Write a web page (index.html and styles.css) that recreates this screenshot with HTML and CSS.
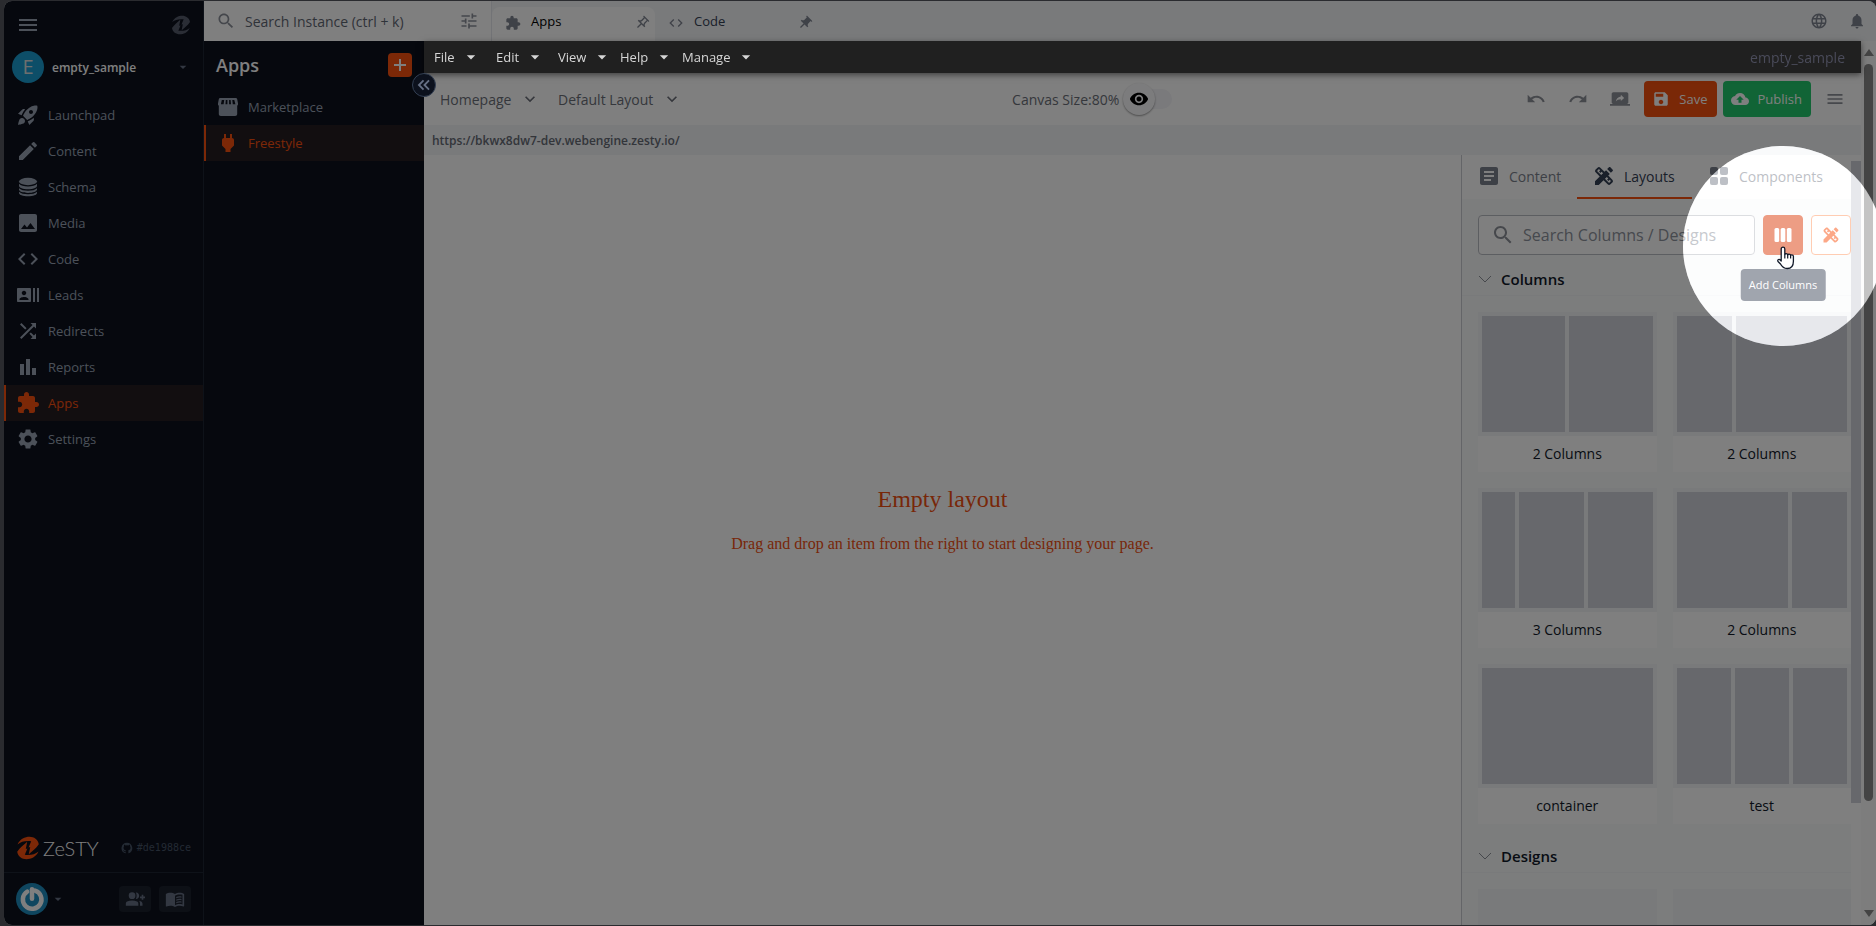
FILE: index.html
```html
<!DOCTYPE html>
<html lang="en">
<head>
<meta charset="utf-8">
<title>Zesty Freestyle</title>
<link rel="stylesheet" href="styles.css">
</head>
<body>
<svg class="sprite" aria-hidden="true">
  <symbol id="i-menu" viewBox="0 0 24 24"><path d="M3 18h18v-2H3v2zm0-5h18v-2H3v2zm0-7v2h18V6H3z"/></symbol>
  <symbol id="i-zmark" viewBox="0 0 24 24"><path d="M1.500 8.500C4 3 9 .8 13.500.8c4.500 0 8.500 2.700 9.300 7.500-2.800 4.200-6.800 7.200-10 10l1.400-7.300-1.600.4 2.600-6.200C9.500 4.600 5 5.500 1.500 8.500z"/><path transform="rotate(180 12 12)" d="M1.500 8.500C4 3 9 .8 13.500.8c4.500 0 8.500 2.700 9.300 7.500-2.800 4.200-6.800 7.200-10 10l1.400-7.300-1.600.4 2.600-6.200C9.500 4.600 5 5.500 1.500 8.500z"/></symbol>
  <symbol id="i-rocket" viewBox="0 0 24 24"><path d="M9.190 6.350c-2.040 2.290-3.440 5.580-3.570 5.890L2 10.690l4.050-4.050c.47-.47 1.150-.68 1.810-.55l1.330.26zM11.170 17s3.740-1.550 5.890-3.700c5.400-5.400 4.500-9.620 4.210-10.570-.95-.3-5.170-1.190-10.570 4.210C8.550 9.090 7 12.830 7 12.830L11.170 17zm6.480-2.190c-2.290 2.040-5.580 3.440-5.890 3.570L13.310 22l4.050-4.050c.47-.47.68-1.150.55-1.810l-.26-1.330zM9 18c0 .83-.34 1.580-.88 2.120C6.940 21.300 2 22 2 22s.7-4.940 1.880-6.120C4.420 15.340 5.170 15 6 15c1.660 0 3 1.340 3 3zm4-9c0-1.100.9-2 2-2s2 .9 2 2-.9 2-2 2-2-.9-2-2z"/></symbol>
  <symbol id="i-pencil" viewBox="0 0 24 24"><path d="M3 17.250V21h3.750L17.810 9.940l-3.750-3.750L3 17.250zM20.710 7.040c.39-.39.39-1.020 0-1.410l-2.340-2.340a1 1 0 0 0-1.410 0l-1.830 1.830 3.750 3.750 1.830-1.830z"/></symbol>
  <symbol id="i-db" viewBox="0 0 24 24"><ellipse cx="12" cy="6.500" rx="9" ry="3.700"/><path d="M3 8.800c1.600 1.800 5 2.600 9 2.600s7.400-.8 9-2.600v1.900c0 2-4 3.500-9 3.500s-9-1.500-9-3.500zM3 13.200c1.600 1.700 5 2.500 9 2.500s7.400-.8 9-2.500v1.300c0 2-4 3.400-9 3.400s-9-1.400-9-3.400zM3 16.800c1.600 1.700 5 2.500 9 2.500s7.400-.8 9-2.500v1.200c0 2-4 3.200-9 3.200s-9-1.200-9-3.200z"/></symbol>
  <symbol id="i-image" viewBox="0 0 24 24"><path d="M21 19V5c0-1.100-.9-2-2-2H5c-1.100 0-2 .9-2 2v14c0 1.100.9 2 2 2h14c1.100 0 2-.9 2-2zM8.500 13.500l2.500 3.010L14.500 12l4.500 6H5l3.500-4.500z"/></symbol>
  <symbol id="i-code" viewBox="0 0 24 24"><path d="M9.400 16.600 4.800 12l4.600-4.600L8 6l-6 6 6 6 1.400-1.400zm5.200 0 4.600-4.600-4.600-4.600L16 6l6 6-6 6-1.400-1.400z"/></symbol>
  <symbol id="i-leads" viewBox="0 0 24 24"><path d="M21 5v14h2V5h-2zm-4 14h2V5h-2v14zM14 5H2c-.55 0-1 .45-1 1v12c0 .55.45 1 1 1h12c.55 0 1-.45 1-1V6c0-.55-.45-1-1-1zM8 7.750c1.240 0 2.250 1.010 2.250 2.250S9.240 12.250 8 12.250 5.750 11.240 5.750 10 6.760 7.750 8 7.750zM12.500 17h-9v-.75c0-1.500 3-2.250 4.500-2.250s4.500.75 4.500 2.250V17z"/></symbol>
  <symbol id="i-shuffle" viewBox="0 0 24 24"><path d="M10.590 9.170 5.410 4 4 5.410l5.170 5.170 1.420-1.410zM14.500 4l2.040 2.040L4 18.590 5.410 20 17.960 7.460 20 9.500V4h-5.500zm.33 9.410-1.410 1.410 3.130 3.130L14.500 20H20v-5.500l-2.040 2.040-3.130-3.130z"/></symbol>
  <symbol id="i-bars" viewBox="0 0 24 24"><path d="M4 9h4v11H4zM16 13h4v7h-4zM10 4h4v16h-4z"/></symbol>
  <symbol id="i-puzzle" viewBox="0 0 24 24"><path d="M20.500 11H19V7c0-1.100-.9-2-2-2h-4V3.500C13 2.120 11.880 1 10.500 1S8 2.120 8 3.500V5H4c-1.100 0-1.990.9-1.990 2v3.800H3.500c1.490 0 2.700 1.210 2.700 2.700s-1.210 2.700-2.700 2.700H2V20c0 1.100.9 2 2 2h3.800v-1.500c0-1.490 1.210-2.700 2.700-2.700 1.490 0 2.700 1.210 2.700 2.700V22H17c1.100 0 2-.9 2-2v-4h1.500c1.380 0 2.500-1.120 2.500-2.500S21.880 11 20.500 11z"/></symbol>
  <symbol id="i-gear" viewBox="0 0 24 24"><path d="M19.140 12.940c.04-.3.06-.61.06-.94 0-.32-.02-.64-.07-.94l2.030-1.580c.18-.14.23-.41.12-.61l-1.920-3.320c-.12-.22-.37-.29-.59-.22l-2.390.96c-.5-.38-1.030-.7-1.620-.94l-.36-2.540c-.04-.24-.24-.41-.48-.41h-3.840c-.24 0-.43.17-.47.41l-.36 2.540c-.59.24-1.130.57-1.620.94l-2.390-.96c-.22-.08-.47 0-.59.22L2.740 8.870c-.12.21-.08.47.12.61l2.030 1.580c-.05.3-.09.63-.09.94s.02.64.07.94l-2.030 1.580c-.18.14-.23.41-.12.61l1.920 3.320c.12.22.37.29.59.22l2.390-.96c.5.38 1.030.7 1.620.94l.36 2.540c.05.24.24.41.48.41h3.840c.24 0 .44-.17.47-.41l.36-2.540c.59-.24 1.130-.56 1.620-.94l2.390.96c.22.08.47 0 .59-.22l1.920-3.320c.12-.22.07-.47-.12-.61l-2.010-1.580zM12 15.600c-1.980 0-3.600-1.620-3.600-3.600s1.620-3.600 3.600-3.600 3.600 1.620 3.600 3.600-1.620 3.600-3.600 3.600z"/></symbol>
  <symbol id="i-store" viewBox="0 0 24 24"><path d="M4.500 3h15c.9 0 1.500.5 1.700 1.300L22 8.200c.2 1-.1 1.900-.8 2.600V19c0 1.100-.9 2-2 2H4.800c-1.100 0-2-.9-2-2v-8.200C2.100 10.100 1.800 9.200 2 8.200l.8-3.900C3 3.500 3.600 3 4.500 3zM5.800 5l-.9 4.200h2.700L8.200 5zm4 0-.3 4.200h1.900V5zm3.300 0v4.200H15L14.600 5zm3.200 0 .5 4.200h2.600L18.300 5z"/></symbol>
  <symbol id="i-plug" viewBox="0 0 24 24"><path d="M16.010 7 16 3h-2v4h-4V3H8v4h-.01C7 6.990 6 7.990 6 8.990v5.490L9.500 18v3h5v-3l3.500-3.510v-5.500c0-1-1-2-1.990-1.990z"/></symbol>
  <symbol id="i-search" viewBox="0 0 24 24"><path d="M15.500 14h-.79l-.28-.27C15.410 12.590 16 11.110 16 9.500 16 5.910 13.090 3 9.500 3S3 5.910 3 9.500 5.910 16 9.500 16c1.610 0 3.090-.59 4.230-1.570l.27.28v.79l5 4.990L20.490 19l-4.990-5zm-6 0C7.010 14 5 11.990 5 9.500S7.010 5 9.500 5 14 7.010 14 9.500 11.990 14 9.500 14z"/></symbol>
  <symbol id="i-tune" viewBox="0 0 24 24"><path d="M3 17v2h6v-2H3zM3 5v2h10V5H3zm10 16v-2h8v-2h-8v-2h-2v6h2zM7 9v2H3v2h4v2h2V9H7zm14 4v-2H11v2h10zm-6-4h2V7h4V5h-4V3h-2v6z"/></symbol>
  <symbol id="i-pin-o" viewBox="0 0 24 24"><path transform="rotate(45 12 12)" d="M14 4v5c0 1.120.37 2.160 1 3H9c.65-.86 1-1.900 1-3V4h4m3-2H7c-.55 0-1 .45-1 1s.45 1 1 1h1v5c0 1.660-1.340 3-3 3v2h5.970v7l1 1 1-1v-7H19v-2c-1.660 0-3-1.340-3-3V4h1c.55 0 1-.45 1-1s-.45-1-1-1z"/></symbol>
  <symbol id="i-pin" viewBox="0 0 24 24"><path transform="rotate(45 12 12)" d="M16 9V4h1c.55 0 1-.45 1-1s-.45-1-1-1H7c-.55 0-1 .45-1 1s.45 1 1 1h1v5c0 1.660-1.340 3-3 3v2h5.970v7l1 1 1-1v-7H19v-2c-1.660 0-3-1.340-3-3z"/></symbol>
  <symbol id="i-globe" viewBox="0 0 24 24"><path d="M11.990 2C6.470 2 2 6.480 2 12s4.470 10 9.990 10C17.520 22 22 17.520 22 12S17.520 2 11.990 2zm6.930 6h-2.950c-.32-1.250-.78-2.450-1.380-3.560 1.840.63 3.370 1.910 4.330 3.560zM12 4.040c.83 1.200 1.480 2.530 1.910 3.960h-3.820c.43-1.430 1.080-2.760 1.910-3.960zM4.260 14C4.100 13.360 4 12.690 4 12s.1-1.360.26-2h3.380c-.08.66-.14 1.320-.14 2s.06 1.340.14 2H4.260zm.82 2h2.950c.32 1.250.78 2.450 1.380 3.560-1.840-.63-3.370-1.900-4.330-3.560zm2.950-8H5.080c.96-1.660 2.490-2.930 4.330-3.560C8.810 5.550 8.350 6.750 8.030 8zM12 19.960c-.83-1.200-1.480-2.530-1.910-3.960h3.820c-.43 1.430-1.080 2.760-1.910 3.960zM14.340 14H9.660c-.09-.66-.16-1.320-.16-2s.07-1.350.16-2h4.680c.09.65.16 1.320.16 2s-.07 1.340-.16 2zm.25 5.560c.6-1.110 1.060-2.310 1.380-3.560h2.950c-.96 1.650-2.490 2.930-4.330 3.560zM16.360 14c.08-.66.14-1.320.14-2s-.06-1.340-.14-2h3.380c.16.64.26 1.310.26 2s-.1 1.360-.26 2h-3.380z"/></symbol>
  <symbol id="i-bell" viewBox="0 0 24 24"><path d="M12 22c1.100 0 2-.9 2-2h-4c0 1.100.89 2 2 2zm6-6v-5c0-3.070-1.640-5.640-4.500-6.320V4c0-.83-.67-1.500-1.500-1.500s-1.500.67-1.500 1.500v.68C7.630 5.360 6 7.920 6 11v5l-2 2v1h16v-1l-2-2z"/></symbol>
  <symbol id="i-caret" viewBox="0 0 24 24"><path d="m7 10 5 5 5-5z"/></symbol>
  <symbol id="i-chevron" viewBox="0 0 24 24"><path d="M7.410 8.590 12 13.170l4.590-4.580L18 10l-6 6-6-6z"/></symbol>
  <symbol id="i-eye" viewBox="0 0 24 24"><path d="M12 4.500C7 4.500 2.730 7.610 1 12c1.730 4.390 6 7.500 11 7.500s9.270-3.110 11-7.500c-1.730-4.390-6-7.500-11-7.500zM12 17c-2.760 0-5-2.240-5-5s2.240-5 5-5 5 2.240 5 5-2.240 5-5 5zm0-8c-1.660 0-3 1.340-3 3s1.340 3 3 3 3-1.340 3-3-1.340-3-3-3z"/></symbol>
  <symbol id="i-undo" viewBox="0 0 24 24"><path d="M12.500 8c-2.650 0-5.050.99-6.900 2.600L2 7v9h9l-3.620-3.620c1.390-1.160 3.160-1.880 5.120-1.880 3.540 0 6.550 2.310 7.600 5.500l2.370-.78C21.080 11.030 17.150 8 12.500 8z"/></symbol>
  <symbol id="i-redo" viewBox="0 0 24 24"><path d="M18.400 10.600C16.550 8.990 14.150 8 11.500 8c-4.650 0-8.580 3.030-9.960 7.220L3.900 16c1.050-3.190 4.050-5.500 7.600-5.500 1.950 0 3.730.72 5.120 1.880L13 16h9V7l-3.600 3.600z"/></symbol>
  <symbol id="i-share" viewBox="0 0 24 24"><path d="M20 18c1.100 0 1.990-.9 1.990-2L22 6c0-1.110-.9-2-2-2H4c-1.110 0-2 .89-2 2v10c0 1.100.89 2 2 2H0v2h24v-2h-4zm-7-3.530v-2.190c-2.780 0-4.610.85-6 2.720.56-2.670 2.110-5.330 6-5.870V7l4 3.730-4 3.740z"/></symbol>
  <symbol id="i-save" viewBox="0 0 24 24"><path d="M17 3H5c-1.110 0-2 .9-2 2v14c0 1.100.89 2 2 2h14c1.100 0 2-.9 2-2V7l-4-4zm-5 16c-1.660 0-3-1.340-3-3s1.340-3 3-3 3 1.340 3 3-1.340 3-3 3zm3-10H5V5h10v4z"/></symbol>
  <symbol id="i-cloud" viewBox="0 0 24 24"><path d="M19.350 10.040C18.670 6.590 15.640 4 12 4 9.110 4 6.600 5.640 5.350 8.040 2.340 8.360 0 10.910 0 14c0 3.310 2.690 6 6 6h13c2.760 0 5-2.240 5-5 0-2.640-2.050-4.780-4.650-4.960zM14 13v4h-4v-4H7l5-5 5 5h-3z"/></symbol>
  <symbol id="i-article" viewBox="0 0 24 24"><path d="M19 3H5c-1.100 0-2 .9-2 2v14c0 1.100.9 2 2 2h14c1.100 0 2-.9 2-2V5c0-1.100-.9-2-2-2zm-5 14H7v-2h7v2zm3-4H7v-2h10v2zm0-4H7V7h10v2z"/></symbol>
  <symbol id="i-design" viewBox="0 0 24 24"><path d="m16.240 11.510 1.570-1.570-3.750-3.750-1.570 1.570-4.140-4.130c-.78-.78-2.050-.78-2.830 0l-1.900 1.900c-.78.78-.78 2.050 0 2.830l4.130 4.130L3 17.250V21h3.750l4.760-4.760 4.130 4.130c.95.95 2.230.6 2.830 0l1.900-1.900c.78-.78.78-2.050 0-2.830l-4.130-4.130zm-7.060-.44L5.040 6.940l1.890-1.900L8.200 6.310 7.020 7.500l1.410 1.410 1.190-1.190 1.450 1.450-1.890 1.900zm7.880 7.890-4.130-4.130 1.900-1.900 1.450 1.450-1.190 1.190 1.410 1.410 1.190-1.190 1.270 1.270-1.900 1.900zM20.710 7.040c.39-.39.39-1.020 0-1.410l-2.340-2.340c-.47-.47-1.120-.29-1.410 0l-1.830 1.830 3.750 3.750 1.830-1.830z"/></symbol>
  <symbol id="i-blocks" viewBox="0 0 24 24"><rect x="3" y="3" width="8" height="8" rx="2"/><rect x="13" y="3" width="8" height="8" rx="2"/><rect x="3" y="13" width="8" height="8" rx="2"/><rect x="13" y="13" width="8" height="8" rx="2"/></symbol>
  <symbol id="i-columns" viewBox="0 0 24 24"><rect x="1.800" y="3.600" width="5.600" height="16.800" rx="1.800"/><rect x="9.200" y="3.600" width="5.600" height="16.800" rx="1.800"/><rect x="16.600" y="3.600" width="5.600" height="16.800" rx="1.800"/></symbol>
  <symbol id="i-github" viewBox="0 0 24 24"><path d="M12 1.300a11 11 0 0 0-3.500 21.400c.6.100.8-.2.800-.5v-2.100c-3 .7-3.700-1.300-3.700-1.300-.5-1.300-1.200-1.600-1.200-1.600-1-.7.1-.7.100-.7 1.100.1 1.700 1.100 1.700 1.100 1 1.700 2.600 1.200 3.200.9.100-.7.400-1.200.7-1.500-2.400-.3-5-1.200-5-5.400 0-1.200.4-2.200 1.100-3-.1-.3-.5-1.400.1-2.900 0 0 .9-.3 3 1.100a10.500 10.500 0 0 1 5.500 0c2.100-1.400 3-1.100 3-1.100.6 1.500.2 2.600.1 2.900.7.800 1.100 1.800 1.100 3 0 4.200-2.600 5.100-5 5.400.4.300.8 1 .8 2v3c0 .3.200.6.800.5A11 11 0 0 0 12 1.300z"/></symbol>
  <symbol id="i-group" viewBox="0 0 24 24"><circle cx="8.500" cy="8" r="4"/><path d="M1 20v-2.300c0-1.200.6-2.100 1.600-2.600C4.300 14.300 6.300 13.800 8.500 13.800s4.200.5 5.900 1.300c1 .5 1.600 1.400 1.600 2.600V20zM13 4.100c2.200-.3 4 1.500 4 3.900s-1.800 4.200-4 3.900c1.300-2.200 1.300-5.600 0-7.800zM17 14.200c2.400.6 4 1.700 4 3.600V20h-3v-2.500c0-1.300-.3-2.400-1-3.300zM20 7h2v2h2v2h-2v2h-2v-2h-2V9h2z"/></symbol>
  <symbol id="i-book" viewBox="0 0 24 24"><path d="M12 6C10.500 4.900 8.500 4.500 6.500 4.500S2.400 4.900 1 6v14.600c0 .4.400.6.800.4C3.200 20.400 5 20 6.500 20c2 0 4 .4 5.500 1.500 1.500-1 3.700-1.500 5.500-1.500 1.600 0 3.300.3 4.700 1 .4.200.8-.1.800-.5V6c-1.500-1.100-3.500-1.500-5.500-1.500S13.500 4.900 12 6zm9 12.500c-1.100-.3-2.300-.5-3.500-.5-1.700 0-4.100.6-5.500 1.500V8c1.400-.9 3.800-1.500 5.500-1.500 1.200 0 2.400.2 3.500.5zM13.500 9.500c2-.7 4-.9 6.300-.5v1.500c-2.200-.4-4.300-.2-6.300.6zm0 3c2-.7 4-.9 6.300-.5v1.500c-2.200-.4-4.300-.2-6.300.6zm0 3c2-.7 4-.9 6.300-.5v1.500c-2.200-.4-4.300-.2-6.300.6z"/></symbol>
</svg>

<div class="app">
  <aside class="sidebar">
    <div class="side-top">
      <button class="plain" aria-label="Menu"><svg class="i24"><use href="#i-menu"/></svg></button>
      <svg class="i20 zgrey"><use href="#i-zmark"/></svg>
    </div>
    <button class="account plain">
      <span class="avatar">E</span><span class="account-name">empty_sample</span><svg class="i16 dim"><use href="#i-caret"/></svg>
    </button>
    <nav class="nav">
      <a href="#"><svg class="i24"><use href="#i-rocket"/></svg>Launchpad</a>
      <a href="#"><svg class="i24"><use href="#i-pencil"/></svg>Content</a>
      <a href="#"><svg class="i24"><use href="#i-db"/></svg>Schema</a>
      <a href="#"><svg class="i24"><use href="#i-image"/></svg>Media</a>
      <a href="#"><svg class="i24"><use href="#i-code"/></svg>Code</a>
      <a href="#"><svg class="i24"><use href="#i-leads"/></svg>Leads</a>
      <a href="#"><svg class="i24"><use href="#i-shuffle"/></svg>Redirects</a>
      <a href="#"><svg class="i24"><use href="#i-bars"/></svg>Reports</a>
      <a href="#" class="active"><svg class="i24"><use href="#i-puzzle"/></svg>Apps</a>
      <a href="#"><svg class="i24"><use href="#i-gear"/></svg>Settings</a>
    </nav>
    <div class="brand">
      <svg class="i24 zorange"><use href="#i-zmark"/></svg>
      <span class="wordmark">ZeSTY</span>
      <a class="commit" href="#"><svg class="i12"><use href="#i-github"/></svg>#de1988ce</a>
    </div>
    <div class="side-foot">
      <button class="user plain" aria-label="Profile">
        <svg class="i32" viewBox="0 0 32 32"><circle cx="16" cy="16" r="16" fill="#1e8cbe"/><path d="M11.200 8.600A9.300 9.300 0 1 0 19 7.600" fill="none" stroke="#fff" stroke-width="4.500" stroke-linecap="round"/><path d="M16 6.200v9.500" stroke="#fff" stroke-width="4.500" stroke-linecap="round"/></svg>
        <svg class="i16 dim"><use href="#i-caret"/></svg>
      </button>
      <button class="square" aria-label="Invite"><svg class="i20"><use href="#i-group"/></svg></button>
      <button class="square" aria-label="Docs"><svg class="i20"><use href="#i-book"/></svg></button>
    </div>
  </aside>

  <div class="workspace">
    <header class="topbar">
      <label class="global-search"><svg class="i20"><use href="#i-search"/></svg><input type="text" aria-label="Search Instance" placeholder="Search Instance (ctrl + k)"><svg class="i20"><use href="#i-tune"/></svg></label>
      <div class="tab current"><svg class="i16"><use href="#i-puzzle"/></svg><a href="#">Apps</a><svg class="i16"><use href="#i-pin-o"/></svg></div>
      <div class="tab"><svg class="i16"><use href="#i-code"/></svg><a href="#">Code</a><svg class="i16"><use href="#i-pin"/></svg></div>
      <div class="top-icons"><svg class="i18"><use href="#i-globe"/></svg><svg class="i18"><use href="#i-bell"/></svg></div>
    </header>

    <div class="body">
      <aside class="apps">
        <div class="apps-head"><h1>Apps</h1><button class="add" aria-label="Add app"><svg viewBox="0 0 24 24"><path d="M6 12h12M12 6v12" stroke="#fff" stroke-width="2"/></svg></button></div>
        <nav class="nav">
          <a href="#"><svg class="i24"><use href="#i-store"/></svg>Marketplace</a>
          <a href="#" class="active"><svg class="i24"><use href="#i-plug"/></svg>Freestyle</a>
        </nav>
        <button class="collapse" aria-label="Collapse"><svg viewBox="0 0 24 24"><path d="M11.500 7 6.500 12l5 5M17.500 7l-5 5 5 5" fill="none" stroke="#667085" stroke-width="2"/></svg></button>
      </aside>

      <main class="editor">
        <div class="editor-main">
          <div class="menubar">
            <button>File<svg class="i20"><use href="#i-caret"/></svg></button>
            <button>Edit<svg class="i20"><use href="#i-caret"/></svg></button>
            <button>View<svg class="i20"><use href="#i-caret"/></svg></button>
            <button>Help<svg class="i20"><use href="#i-caret"/></svg></button>
            <button>Manage<svg class="i20"><use href="#i-caret"/></svg></button>
            <span class="instance">empty_sample</span>
          </div>
          <div class="toolbar">
            <div class="picks">
              <label class="pick"><select aria-label="Page"><option>Homepage</option></select><svg class="i20"><use href="#i-chevron"/></svg></label>
              <label class="pick"><select aria-label="Layout"><option>Default Layout</option></select><svg class="i20"><use href="#i-chevron"/></svg></label>
            </div>
            <div class="canvas-size"><label for="preview">Canvas Size:80%</label><span class="switch"><input type="checkbox" id="preview"><span class="knob"><svg class="i20"><use href="#i-eye"/></svg></span></span></div>
            <div class="actions">
              <button class="plain" aria-label="Undo"><svg class="i20"><use href="#i-undo"/></svg></button>
              <button class="plain" aria-label="Redo"><svg class="i20"><use href="#i-redo"/></svg></button>
              <button class="plain" aria-label="Share"><svg class="i20"><use href="#i-share"/></svg></button>
              <div class="cta-group"><button class="cta save"><svg class="i18"><use href="#i-save"/></svg>Save</button><button class="cta publish"><svg class="i18"><use href="#i-cloud"/></svg>Publish</button></div>
              <button class="plain" aria-label="More"><svg class="i20"><use href="#i-menu"/></svg></button>
            </div>
          </div>
          <div class="url">https://bkwx8dw7-dev.webengine.zesty.io/</div>
          <div class="stage">
            <section class="canvas"><h2>Empty layout</h2><p>Drag and drop an item from the right to start designing your page.</p></section>
            <aside class="panel">
              <div class="panel-body">
                <nav class="panel-tabs">
                  <a href="#"><svg class="i24"><use href="#i-article"/></svg>Content</a>
                  <a href="#" class="on"><svg class="i24"><use href="#i-design"/></svg>Layouts</a>
                  <a href="#"><svg class="i24"><use href="#i-blocks"/></svg>Components</a>
                </nav>
                <div class="find">
                  <label class="find-box"><svg class="i24"><use href="#i-search"/></svg><input type="text" aria-label="Search Columns / Designs" placeholder="Search Columns / Designs"></label>
                  <div class="tip-wrap"><button class="tool filled" aria-label="Add Columns"><svg class="i20"><use href="#i-columns"/></svg></button><span class="tip">Add Columns</span></div>
                  <button class="tool" aria-label="Add Design"><svg class="i20"><use href="#i-design"/></svg></button>
                </div>
                <h3 class="group"><svg class="thin" viewBox="0 0 16 16"><path d="M2 5l6 6 6-6"/></svg>Columns</h3>
                <div class="cards">
                  <div class="card"><div class="thumb"><i class="f1"></i><i class="f1"></i></div><p>2 Columns</p></div>
                  <div class="card"><div class="thumb"><i class="f1"></i><i class="f2"></i></div><p>2 Columns</p></div>
                  <div class="card"><div class="thumb"><i class="f1"></i><i class="f2"></i><i class="f2"></i></div><p>3 Columns</p></div>
                  <div class="card"><div class="thumb"><i class="f2"></i><i class="f1"></i></div><p>2 Columns</p></div>
                  <div class="card"><div class="thumb"><i class="f1"></i></div><p>container</p></div>
                  <div class="card"><div class="thumb"><i class="f1"></i><i class="f1"></i><i class="f1"></i></div><p>test</p></div>
                </div>
                <h3 class="group"><svg class="thin" viewBox="0 0 16 16"><path d="M2 5l6 6 6-6"/></svg>Designs</h3>
                <div class="cards"><div class="card"><div class="thumb"></div></div><div class="card"><div class="thumb"></div></div></div>
              </div>
              <div class="panel-scroll"><div class="panel-thumb"></div></div>
            </aside>
          </div>
        </div>
        <div class="scroll"><span class="up"></span><div class="rail"><div class="bar"></div></div><span class="down"></span></div>
      </main>
    </div>
  </div>
</div>
<div class="spotlight"></div>
<svg class="pointer" viewBox="0 0 20 24"><path d="M7 1.200c1 0 1.800.8 1.800 1.800v5.600c.2-.7.7-1 1.400-1 .8 0 1.400.5 1.500 1.200.3-.5.800-.7 1.300-.7.9 0 1.500.6 1.600 1.300.3-.4.700-.6 1.200-.6.900 0 1.600.6 1.600 1.500v4.900c0 4.700-2.300 7.300-6.200 7.300-3.300 0-5.200-1.700-6.700-4.500L2 15.500c-.4-.8-.3-1.600.4-2 .7-.3 1.400-.1 1.900.5l.9 1V3c0-1 .8-1.800 1.800-1.800z" fill="#fff" stroke="#101828" stroke-width="1.300" stroke-linejoin="round"/><path d="M8.800 8.500v4M11.700 8.800v3.700M14.600 9.500v3" stroke="#101828" stroke-width="1.200"/></svg>
</body>
</html>
```

FILE: styles.css
```css
* { box-sizing: border-box; }
body {
  margin: 0;
  height: 100vh;
  padding: 1px 0 1px 4px;
  overflow: hidden;
  background: #54565e;
  font-family: "Open Sans", "Noto Sans", sans-serif;
  font-size: 13px;
  color: #101828;
}
h1, h2, h3, p { margin: 0; }
a { color: inherit; text-decoration: none; }
button, input, select { font: inherit; color: inherit; border: 0; padding: 0; background: none; }
svg { display: block; flex: none; fill: currentColor; }
.sprite { position: absolute; width: 0; height: 0; }
.i12 { width: 12px; height: 12px; }
.i16 { width: 16px; height: 16px; }
.i18 { width: 18px; height: 18px; }
.i20 { width: 20px; height: 20px; }
.i24 { width: 24px; height: 24px; }
.i32 { width: 32px; height: 32px; }
.dim { color: #667085; }
.plain { display: flex; align-items: center; }

.app { display: flex; height: 100%; border-radius: 8px; overflow: hidden; background: #fff; }

/* primary navigation */
.sidebar {
  flex: 0 0 200px;
  display: flex;
  flex-direction: column;
  background: #0c111d;
  color: #98a2b3;
  border-right: 1px solid #1d2433;
}
.side-top { display: flex; justify-content: space-between; align-items: center; padding: 12px; color: #98a2b3; }
.zgrey { color: #555b6b; }
.account { margin: 2px 12px 14px 8px; gap: 8px; }
.avatar {
  width: 32px; height: 32px; border-radius: 50%;
  display: grid; place-items: center;
  background: #1a9cd0; color: #ddd; font-size: 20px; line-height: 32px;
}
.account-name { flex: 1; text-align: left; font-size: 12px; font-weight: 600; color: #fff; }
.nav { display: flex; flex-direction: column; }
.nav a {
  display: flex; align-items: center; gap: 8px;
  height: 36px; padding-left: 10px;
  border-left: 2px solid transparent;
  color: #98a2b3; font-weight: 500;
}
.nav a.active { color: #f9500f; background: #241c20; border-left-color: #f9500f; }
.sidebar .nav { flex: 1; }
.brand { display: flex; align-items: center; height: 50px; padding: 0 12px; border-bottom: 1px solid #1d2433; }
.zorange { color: #f9500f; }
.wordmark { margin-left: 3px; font-family: Lato, sans-serif; font-weight: 300; font-size: 20px; color: #fff; }
.commit { display: flex; align-items: center; gap: 4px; margin-left: auto; color: #475467; font-family: "DejaVu Sans Mono", monospace; font-size: 10px; }
.side-foot { display: flex; align-items: center; gap: 8px; height: 52px; padding: 0 12px; }
.user { gap: 2px; margin-right: auto; }
.square { display: grid; place-items: center; width: 32px; height: 26px; border-radius: 4px; background: #1a202c; color: #667085; }

/* top bar */
.workspace { flex: 1; min-width: 0; display: flex; flex-direction: column; }
.topbar { display: flex; align-items: flex-end; height: 40px; background: #f2f4f7; color: #667085; }
.global-search { display: flex; align-items: center; width: 288px; height: 40px; padding: 0 12px; gap: 9px; background: #fff; color: #8a8f99; border-right: 1px solid #e4e7ec; }
.global-search input { flex: 1; min-width: 0; font-size: 14px; }
input { outline: 0; }
input::placeholder { color: #5f6672; opacity: 1; }
.tab { display: flex; align-items: center; gap: 10px; width: 163px; height: 34px; padding: 0 5px 2px 13px; color: #7f8490; }
.tab a { flex: 1; padding-bottom: 4px; color: #344054; }
.tab.current { background: #fff; border-radius: 8px 8px 0 0; }
.tab.current a { color: #000; }
.top-icons { display: flex; align-items: center; gap: 20px; height: 40px; margin-left: auto; padding-right: 10px; color: #7f8490; }

.body { flex: 1; min-height: 0; display: flex; }
.apps { position: relative; flex: 0 0 220px; background: #0c111d; }
.apps-head { display: flex; align-items: center; justify-content: space-between; height: 48px; padding: 0 12px; color: #fff; }
.apps h1 { font-size: 18px; font-weight: 600; }
.add { width: 24px; height: 24px; border-radius: 4px; background: #f9500f; }
.collapse {
  position: absolute; z-index: 3; top: 32px; right: -12px;
  width: 24px; height: 24px; border-radius: 50%;
  background: #0c111d; border: 1px solid #344054;
}

/* editor */
.editor { flex: 1; min-width: 0; display: flex; background: #fff; }
.editor-main { flex: 1; min-width: 0; display: flex; flex-direction: column; }
.menubar {
  position: relative; z-index: 2;
  display: flex; align-items: center; height: 32px; padding: 0 16px 0 10px;
  background: #202020; color: #d6d6d6;
  box-shadow: 0 2px 6px rgba(0, 0, 0, .5);
}
.menubar button { display: flex; align-items: center; gap: 6px; min-width: 62px; padding-right: 6px; }
.instance { margin-left: auto; font-size: 14px; color: #4a4b5a; }
.toolbar { display: flex; align-items: center; height: 52px; padding: 0 16px; color: #6b6f78; }
.picks { display: flex; gap: 18px; }
.pick { display: flex; align-items: center; gap: 8px; }
.pick select { appearance: none; font-size: 14px; font-weight: 500; }
.canvas-size { display: flex; align-items: center; gap: 4px; margin: 0 auto; font-size: 14px; }
.switch { position: relative; display: flex; align-items: center; width: 49px; height: 32px; }
.switch input { appearance: none; margin: 0 0 0 14px; width: 35px; height: 20px; border-radius: 10px; background: #f4f4f8; }
.knob {
  position: absolute; left: 0; top: 0; width: 32px; height: 32px; border-radius: 50%;
  display: grid; place-items: center; background: #f9f9fb; color: #000;
  box-shadow: 0 1px 2px rgba(0, 0, 0, .4); pointer-events: none;
}
.actions { display: flex; align-items: center; gap: 22px; padding-left: 24px; color: #8d9098; }
.cta-group { display: flex; gap: 6px; margin: 0 -8px; }
.cta { display: flex; align-items: center; gap: 9px; height: 36px; padding: 0 9px 0 8px; border-radius: 4px; color: #fff; font-size: 13px; }
.save { background: #f4500e; }
.publish { background: #22c96c; }
.url { height: 30px; padding: 1px 8px 0; line-height: 30px; background: #f2f4f7; color: #666b75; font-size: 12px; font-weight: 600; }
.stage { flex: 1; min-height: 0; display: flex; }
.canvas {
  flex: 1; display: flex; flex-direction: column; align-items: center; justify-content: center; gap: 22px;
  padding-bottom: 42px; color: #f04e10; font-family: "Liberation Serif", serif; font-size: 16px;
}
.canvas h2 { font-size: 24px; font-weight: 400; }

/* layouts panel */
.panel { flex: 0 0 400px; display: flex; border-left: 1px solid #c9cbd0; background: #f9fafb; }
.panel-body { flex: 1; min-width: 0; overflow: hidden; }
.panel-tabs { display: flex; height: 44px; background: #fff; color: #7b818c; font-size: 14px; }
.panel-tabs a { display: flex; align-items: center; gap: 8px; min-width: 115px; padding: 0 15px; border-bottom: 2px solid transparent; }
.panel-tabs a.on { color: #344054; border-bottom-color: #f9500f; }
.find { display: flex; gap: 8px; padding: 16px 0 8px 16px; }
.find-box { flex: 1; min-width: 0; display: flex; align-items: center; gap: 8px; height: 40px; padding: 0 12px; border: 1px solid #b9bcc3; border-radius: 4px; background: #fff; color: #8d9098; }
.find-box input { flex: 1; min-width: 0; font-size: 16px; }
.find-box input::placeholder { color: #8d929c; }
.tip-wrap { position: relative; }
.tool { display: grid; place-items: center; width: 40px; height: 40px; border: 1px solid #ff9a66; border-radius: 4px; background: #fff; color: #f9500f; }
.tool.filled { background: #db3a08; border-color: #db3a08; color: #fff; }
.tip {
  position: absolute; top: 54px; left: 50%; transform: translateX(-50%);
  height: 32px; line-height: 32px; padding: 0 8px; border-radius: 4px;
  background: #414a5d; color: #fff; font-size: 11px; font-weight: 500; white-space: nowrap;
}
.group { display: flex; align-items: center; gap: 8px; height: 33px; padding-left: 15px; border-bottom: 1px solid #f2f4f7; font-size: 15px; font-weight: 600; color: #101828; }
.thin { width: 16px; height: 16px; fill: none; stroke: #8d9098; stroke-width: 1; }
.cards { display: grid; grid-template-columns: 1fr 1fr; gap: 16px; padding: 16px 0 16px 16px; }
.card { background: #fff; }
.thumb { display: flex; gap: 4px; height: 124px; padding: 4px; background: #f2f4f7; }
.thumb i { background: #ced0d8; }
.f1 { flex: 1; }
.f2 { flex: 2; }
.card p { height: 36px; line-height: 36px; text-align: center; font-size: 14px; }
.panel-scroll { flex: 0 0 10px; padding-top: 6px; background: #fff; }
.panel-thumb { height: 84%; background: #ced0d8; }

.scroll { flex: 0 0 15px; display: flex; flex-direction: column; align-items: center; padding: 8px 0; background: #fbfbfb; }
.up, .down { border: 5px solid transparent; }
.up { border-top: 0; border-bottom: 7px solid #888; }
.down { border-bottom: 0; border-top: 7px solid #888; }
.rail { flex: 1; width: 9px; margin: 8px 0; }
.bar { height: 88%; border-radius: 5px; background: #888; }

/* guided-tour highlight */
.spotlight {
  position: fixed; top: 146px; right: -7px; width: 200px; height: 200px; border-radius: 50%;
  background: rgba(255, 255, 255, .5);
  box-shadow: 0 0 0 200vw rgba(0, 0, 0, .5);
  pointer-events: none;
}
.pointer { position: fixed; top: 246px; right: 80px; width: 20px; height: 24px; }
```
